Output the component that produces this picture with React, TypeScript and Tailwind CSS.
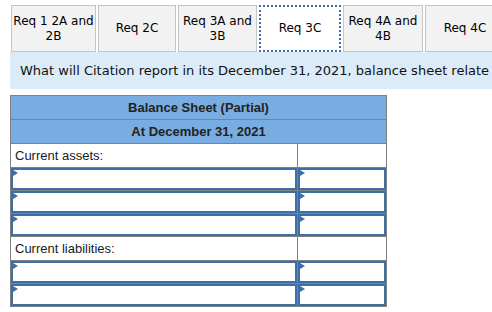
import type React from 'react';

const tabs = [
  { label: ['Req 1 2A and', '2B'], w: 'w-[85px]' },
  { label: ['Req 2C'], w: 'w-[78px]' },
  { label: ['Req 3A and', '3B'], w: 'w-[79px]' },
  { label: ['Req 3C'], w: 'w-[82px]', active: true },
  { label: ['Req 4A and', '4B'], w: 'w-[80px]' },
  { label: ['Req 4C'], w: 'w-[80px]' },
];

const InputCell: React.FC = () => (
  <td className="border border-[#808080] p-0">
    <div className="relative h-[22px] border-2 border-[#3d6ea6] bg-white">
      <span className="absolute left-0 top-0 h-0 w-0 border-y-[3px] border-l-[5px] border-y-transparent border-l-[#3d6ea6]" />
    </div>
  </td>
);

const InputRow: React.FC = () => (
  <tr className="h-[23px]">
    <InputCell />
    <InputCell />
  </tr>
);

const LabelRow: React.FC<{ text: string }> = ({ text }) => (
  <tr className="h-[24px]">
    <td className="border border-[#808080] px-[4px] text-[13px] text-[#1a1a1a]">{text}</td>
    <td className="border border-[#808080]" />
  </tr>
);

export default function App() {
  return (
    <div className="h-[312px] w-[492px] overflow-hidden bg-white">
      {/* TABS */}
      <div className="flex gap-[2px] pl-[11px] pt-[5px] font-['DejaVu_Sans',sans-serif] text-[12px] leading-[15px] text-black">
        {tabs.map((t) => (
          <div
            key={t.label.join(' ')}
            className={
              t.active
                ? `${t.w} flex h-[47px] shrink-0 flex-col items-center justify-center border-2 border-dotted border-[#3d6ea6] bg-white text-center`
                : `${t.w} flex h-[47px] shrink-0 flex-col items-center justify-center border border-[#c4c4c4] bg-[#f2f2f2] text-center`
            }
          >
            {t.label.map((l) => (
              <span key={l} className="whitespace-nowrap">
                {l}
              </span>
            ))}
          </div>
        ))}
      </div>

      {/* QUESTION */}
      <div className="ml-[10px] flex h-[37px] items-center overflow-hidden whitespace-nowrap bg-[#dcebf8] pl-[10px] font-['DejaVu_Sans',sans-serif] text-[13px] text-[#111]">
        What will Citation report in its December 31, 2021, balance sheet relate
      </div>

      {/* TABLE */}
      <table className="ml-[10px] mt-[6px] w-[376px] table-fixed border-collapse font-['Liberation_Sans',Arial,sans-serif]">
        <colgroup>
          <col className="w-[287px]" />
          <col className="w-[89px]" />
        </colgroup>
        <tbody>
          <tr className="h-[24px]">
            <th colSpan={2} className="border border-[#808080] bg-[#79ade2] text-center text-[13px] font-bold text-[#222]">
              Balance Sheet (Partial)
            </th>
          </tr>
          <tr className="h-[24px]">
            <th colSpan={2} className="border border-[#808080] bg-[#79ade2] text-center text-[13px] font-bold text-[#222]">
              At December 31, 2021
            </th>
          </tr>
          <LabelRow text="Current assets:" />
          <InputRow />
          <InputRow />
          <InputRow />
          <LabelRow text="Current liabilities:" />
          <InputRow />
          <InputRow />
        </tbody>
      </table>
    </div>
  );
}
